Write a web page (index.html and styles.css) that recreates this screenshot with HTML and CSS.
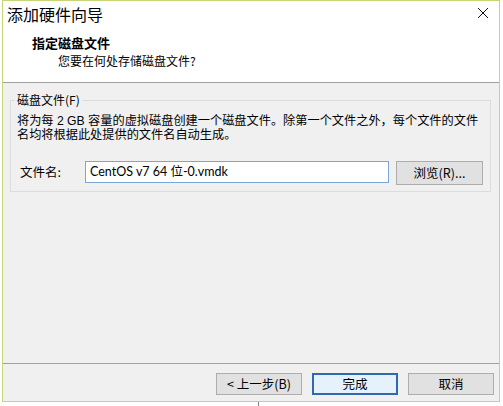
FILE: index.html
```html
<!DOCTYPE html>
<html lang="zh-CN">
<head>
<meta charset="utf-8">
<title>添加硬件向导</title>
<link rel="stylesheet" href="styles.css">
</head>
<body>
<div class="stage">
  <div class="window">
    <div class="titlebar">
      <span class="title">添加硬件向导</span>
      <span class="close" aria-label="关闭">
        <svg width="12" height="12" viewBox="0 0 12 12"><path d="M1 1 L11 11 M11 1 L1 11" stroke="#111" stroke-width="1" fill="none"/></svg>
      </span>
    </div>
    <div class="header">
      <div class="h-title">指定磁盘文件</div>
      <div class="h-sub">您要在何处存储磁盘文件?</div>
    </div>
    <div class="content">
      <div class="group">
        <div class="legend">磁盘文件(F)</div>
        <p class="desc">将为每 2 GB 容量的虚拟磁盘创建一个磁盘文件。除第一个文件之外，每个文件的文件<br>名均将根据此处提供的文件名自动生成。</p>
        <div class="row">
          <label class="lbl">文件名:</label>
          <div class="input">CentOS v7 64 位-0.vmdk</div>
          <button class="btn browse">浏览(R)...</button>
        </div>
      </div>
    </div>
    <div class="footer">
      <button class="btn">&lt; 上一步(B)</button>
      <button class="btn primary">完成</button>
      <button class="btn">取消</button>
    </div>
  </div>
  <span class="tick"></span>
</div>
</body>
</html>
```

FILE: styles.css
```css
html, body {
  margin: 0;
  padding: 0;
  background: #ffffff;
}
body {
  font-family: "Noto Sans CJK SC", "Noto Sans", sans-serif;
  font-size: 12px;
  color: #000;
  width: 503px;
  height: 406px;
  overflow: hidden;
}
.stage {
  position: relative;
  width: 503px;
  height: 406px;
}
.window {
  margin-left: 2px;
  width: 498px;
  height: 402px;
  box-sizing: border-box;
  border: 1px solid #c9d478;
  display: flex;
  flex-direction: column;
  background: #fff;
}
.titlebar {
  height: 29px;
  display: flex;
  align-items: center;
  justify-content: space-between;
  padding-left: 4px;
  padding-right: 9px;
}
.title {
  font-size: 16px;
  line-height: 20px;
  margin-top: -4px;
}
.close {
  display: flex;
  width: 12px;
  height: 12px;
  margin-top: -5px;
  margin-right: 1px;
}
.header {
  height: 53px;
  box-sizing: border-box;
  border-bottom: 1px solid #a0a0a0;
  padding-top: 5px;
}
.h-title {
  font-weight: bold;
  font-size: 13px;
  line-height: 16px;
  padding-left: 29px;
}
.h-sub {
  font-size: 12px;
  line-height: 16px;
  margin-top: 2px;
  padding-left: 55px;
}
.content {
  flex: 1;
  background: #f0f0f0;
  padding: 17px 8px 0 7px;
}
.group {
  position: relative;
  border: 1px solid #dcdcdc;
  height: 92px;
  box-sizing: border-box;
  padding: 13px 4px 0 6px;
}
.legend {
  position: absolute;
  top: -9px;
  left: 4px;
  padding: 0 3px 0 2px;
  background: #f0f0f0;
  font-size: 12px;
  line-height: 16px;
  color: #000;
}
.desc {
  margin: 0;
  font-family: "Liberation Sans", "Noto Sans CJK SC", sans-serif;
  font-size: 12.2px;
  line-height: 14px;
  white-space: nowrap;
  color: #000;
}
.row {
  display: flex;
  align-items: flex-start;
  margin-top: 19px;
}
.lbl {
  width: 68px;
  box-sizing: border-box;
  padding-left: 3px;
  font-size: 12.5px;
  line-height: 22px;
}
.input {
  width: 304px;
  height: 22px;
  box-sizing: border-box;
  border: 1px solid #7aa7d6;
  background: #fff;
  padding-left: 4px;
  font-family: "Lato", "Noto Sans CJK SC", sans-serif;
  font-size: 12.5px;
  line-height: 20px;
}
.btn {
  width: 86px;
  height: 22px;
  box-sizing: border-box;
  border: 1px solid #adadad;
  background: #e1e1e1;
  font-family: "Noto Sans CJK SC", "Noto Sans", sans-serif;
  font-size: 12.5px;
  line-height: 18px;
  color: #000;
  padding: 0;
}
.browse {
  margin-left: 7px;
  width: 87px;
  height: 24px;
}
.footer {
  height: 38px;
  box-sizing: border-box;
  border-top: 1px solid #a0a0a0;
  background: #f0f0f0;
  display: flex;
  justify-content: flex-end;
  align-items: flex-start;
  padding-top: 9px;
  padding-right: 5px;
  gap: 10px;
}
.primary {
  border: 2px solid #2d6ab0;
  background: #e5f1fb;
}
.tick {
  position: absolute;
  left: 258px;
  top: 402px;
  width: 1px;
  height: 4px;
  background: #808080;
}
```
